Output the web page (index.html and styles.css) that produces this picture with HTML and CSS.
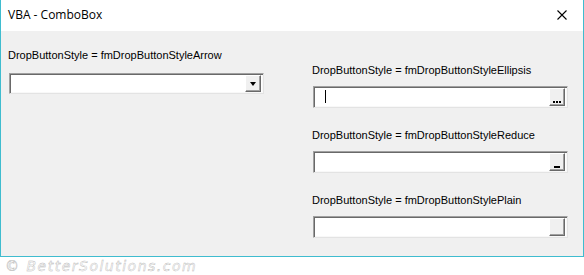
FILE: index.html
```html
<!DOCTYPE html>
<html>
<head>
<meta charset="utf-8">
<link rel="stylesheet" href="styles.css">
</head>
<body>
<div class="window">
  <div class="titlebar">
    <span class="title">VBA - ComboBox</span>
    <svg class="close" width="10" height="10" viewBox="0 0 10 10"><path d="M0.5 0.5 L9.5 9.5 M9.5 0.5 L0.5 9.5" stroke="#000" stroke-width="1.1" fill="none"/></svg>
  </div>
  <div class="content">
    <div class="col left">
      <div class="group">
        <div class="label">DropButtonStyle = fmDropButtonStyleArrow</div>
        <div class="combo">
          <div class="field"></div>
          <div class="btn"><span class="arrow"></span></div>
        </div>
      </div>
    </div>
    <div class="col right">
      <div class="group">
        <div class="label">DropButtonStyle = fmDropButtonStyleEllipsis</div>
        <div class="combo">
          <div class="field"><span class="caret"></span></div>
          <div class="btn"><span class="dots"><i></i><i></i><i></i></span></div>
        </div>
      </div>
      <div class="group">
        <div class="label">DropButtonStyle = fmDropButtonStyleReduce</div>
        <div class="combo">
          <div class="field"></div>
          <div class="btn"><span class="reduce"></span></div>
        </div>
      </div>
      <div class="group">
        <div class="label">DropButtonStyle = fmDropButtonStylePlain</div>
        <div class="combo">
          <div class="field"></div>
          <div class="btn"></div>
        </div>
      </div>
    </div>
  </div>
</div>
<div class="watermark">© BetterSolutions.com</div>
</body>
</html>
```

FILE: styles.css
```css
* { box-sizing: border-box; }
html, body { margin: 0; padding: 0; background: #ffffff; }
body { width: 584px; height: 275px; overflow: hidden; font-family: "Liberation Sans", Arial, sans-serif; }

.window {
  width: 584px;
  height: 257px;
  border-left: 1px solid #3fbccf;
  border-right: 1px solid #3fbccf;
  border-bottom: 1px solid #3fbccf;
  display: flex;
  flex-direction: column;
}

.titlebar {
  height: 31px;
  background: #ffffff;
  display: flex;
  align-items: center;
  justify-content: space-between;
  padding: 0 16px 0 7px;
}
.title {
  font-family: "Open Sans", "Noto Sans", sans-serif;
  font-size: 12px;
  color: #000;
  position: relative;
  top: -1px;
}
.close { display: block; margin-top: -1px; }

.content {
  flex: 1;
  background: #f0f0f0;
  display: flex;
  padding-left: 7px;
}

.col { display: flex; flex-direction: column; }
.left { width: 304px; padding-top: 18px; }
.right { padding-top: 33px; gap: 21px; }

.group { display: flex; flex-direction: column; gap: 9px; }
.left .group { gap: 11px; }

.label {
  font-size: 11px;
  line-height: 13px;
  height: 13px;
  color: #000;
  white-space: nowrap;
}

.combo {
  width: 255px;
  height: 21px;
  display: flex;
  background: #ffffff;
  border-top: 1px solid #a0a0a0;
  border-left: 1px solid #a0a0a0;
  border-right: 1px solid #e3e3e3;
  border-bottom: 1px solid #e3e3e3;
  box-shadow: inset 1px 1px 0 #696969, inset -1px -1px 0 #f8f8f8;
  padding: 1px 2px 1px 1px;
}
.left .combo { margin-left: 1px; }
.right .combo { height: 22px; margin-left: 1px; }

.field { flex: 1; position: relative; }
.caret {
  position: absolute;
  left: 10px;
  top: 2px;
  width: 1px;
  height: 13px;
  background: #000;
}

.btn {
  width: 16px;
  background: #f0f0f0;
  border-top: 1px solid #ffffff;
  border-left: 1px solid #ffffff;
  border-right: 1px solid #696969;
  border-bottom: 1px solid #696969;
  box-shadow: inset -1px -1px 0 #a0a0a0;
  display: flex;
  align-items: center;
  justify-content: center;
  position: relative;
}

.arrow {
  width: 0; height: 0;
  border-left: 3.5px solid transparent;
  border-right: 3.5px solid transparent;
  border-top: 4px solid #000;
  margin-top: 1px;
}

.dots {
  position: absolute;
  bottom: 2px;
  left: 3px;
  display: flex;
  gap: 1px;
}
.dots i { display: block; width: 2px; height: 2px; background: #000; }

.reduce {
  position: absolute;
  bottom: 2px;
  left: 4px;
  width: 6px;
  height: 2px;
  background: #000;
}

.watermark {
  font-family: "DejaVu Sans", sans-serif;
  font-style: italic;
  font-size: 14px;
  letter-spacing: 1.5px;
  color: #ffffff;
  -webkit-text-stroke: 0.4px #b4b4b4;
  padding-left: 5px;
  line-height: 16px;
  margin-top: 1px;
}
```
